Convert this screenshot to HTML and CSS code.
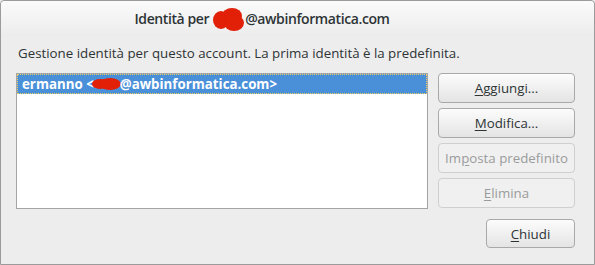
FILE: index.html
```html
<!DOCTYPE html>
<html lang="it">
<head>
  <meta charset="UTF-8" />
  <title>Identità</title>
  <link rel="stylesheet" href="styles.css">
</head>
<body>
  <div class="window">
    <div class="titlebar">
      <span>Identità per</span>
      <svg class="blot blot-title" width="32" height="24" viewBox="0 0 32 24">
        <ellipse cx="8" cy="13" rx="8" ry="9" fill="#e21f07"/>
        <ellipse cx="19" cy="9" rx="10" ry="8" fill="#e21f07"/>
        <ellipse cx="21" cy="16" rx="10" ry="8" fill="#e21f07"/>
      </svg>
      <span>@awbinformatica.com</span>
    </div>

    <div class="content">
      <p class="intro">Gestione identità per questo account. La prima identità è la predefinita.</p>

      <div class="main">
        <div class="list">
          <div class="row selected">
            <span>ermanno &lt;</span>
            <svg class="blot blot-row" width="30" height="12" viewBox="0 0 30 12">
              <ellipse cx="8" cy="6" rx="8" ry="5" fill="#e21f07"/>
              <ellipse cx="18" cy="6" rx="11" ry="6" fill="#e21f07"/>
            </svg>
            <span>@awbinformatica.com&gt;</span>
          </div>
        </div>

        <div class="buttons">
          <button class="btn"><u>A</u>ggiungi...</button>
          <button class="btn"><u>M</u>odifica...</button>
          <button class="btn" disabled>Im<u>p</u>osta predefinito</button>
          <button class="btn" disabled><u>E</u>limina</button>
        </div>
      </div>

      <div class="footer">
        <button class="btn close"><u>C</u>hiudi</button>
      </div>
    </div>
  </div>
</body>
</html>
```

FILE: styles.css
```css
body {
  margin: 0;
  padding: 0;
  background-color: #ededed;
  font-family: 'Open Sans', 'DejaVu Sans', sans-serif;
  color: #2e3436;
}

.window {
  box-sizing: border-box;
  width: 595px;
  height: 265px;
  border: 1px solid #9b9b9b;
  border-radius: 4px 4px 0 0;
  background-color: #ededed;
  display: flex;
  flex-direction: column;
}

.titlebar {
  height: 35px;
  display: flex;
  justify-content: center;
  align-items: center;
  padding-right: 71px;
  background: linear-gradient(#fbfbfb, #ececec);
  border-radius: 4px 4px 0 0;
  font-size: 14px;
  letter-spacing: -0.4px;
  font-weight: 600;
  color: #2e3436;
}

.titlebar span {
  white-space: pre;
}

.blot-title {
  margin-left: 4px;
  margin-top: 1px;
}

.content {
  flex: 1;
  display: flex;
  flex-direction: column;
  padding: 0 19px 0 15px;
}

.intro {
  margin: 7px 0 0 2px;
  font-size: 13.3px;
  line-height: 20px;
}

.main {
  display: flex;
  gap: 10px;
  margin-top: 10px;
}

.list {
  width: 410px;
  height: 134px;
  border: 1px solid #a4a4a4;
  background-color: white;
}

.row {
  height: 18px;
  display: flex;
  align-items: center;
  padding-left: 4px;
  font-size: 13.3px;
  font-weight: bold;
}

.row span {
  white-space: pre;
}

.row.selected {
  background-color: #4a90d9;
  color: white;
  border: 1px dotted #f0d060;
}

.blot-row {
  margin: 0 -2px;
}

.buttons {
  display: flex;
  flex-direction: column;
  gap: 5px;
}

.btn {
  box-sizing: border-box;
  width: 137px;
  height: 30px;
  border: 1px solid #a9a9a9;
  border-radius: 4px;
  background: linear-gradient(#fcfcfc, #e4e4e4);
  font-family: inherit;
  font-size: 13.3px;
  color: #2e3436;
  padding: 0;
}

.btn u {
  text-underline-offset: 2px;
}

.btn:disabled {
  background: #f0f0f0;
  border-color: #cfcfcf;
  color: #9a9c9c;
}

.footer {
  display: flex;
  justify-content: flex-end;
  margin-top: 10px;
}

.btn.close {
  width: 89px;
  height: 29px;
}
```
